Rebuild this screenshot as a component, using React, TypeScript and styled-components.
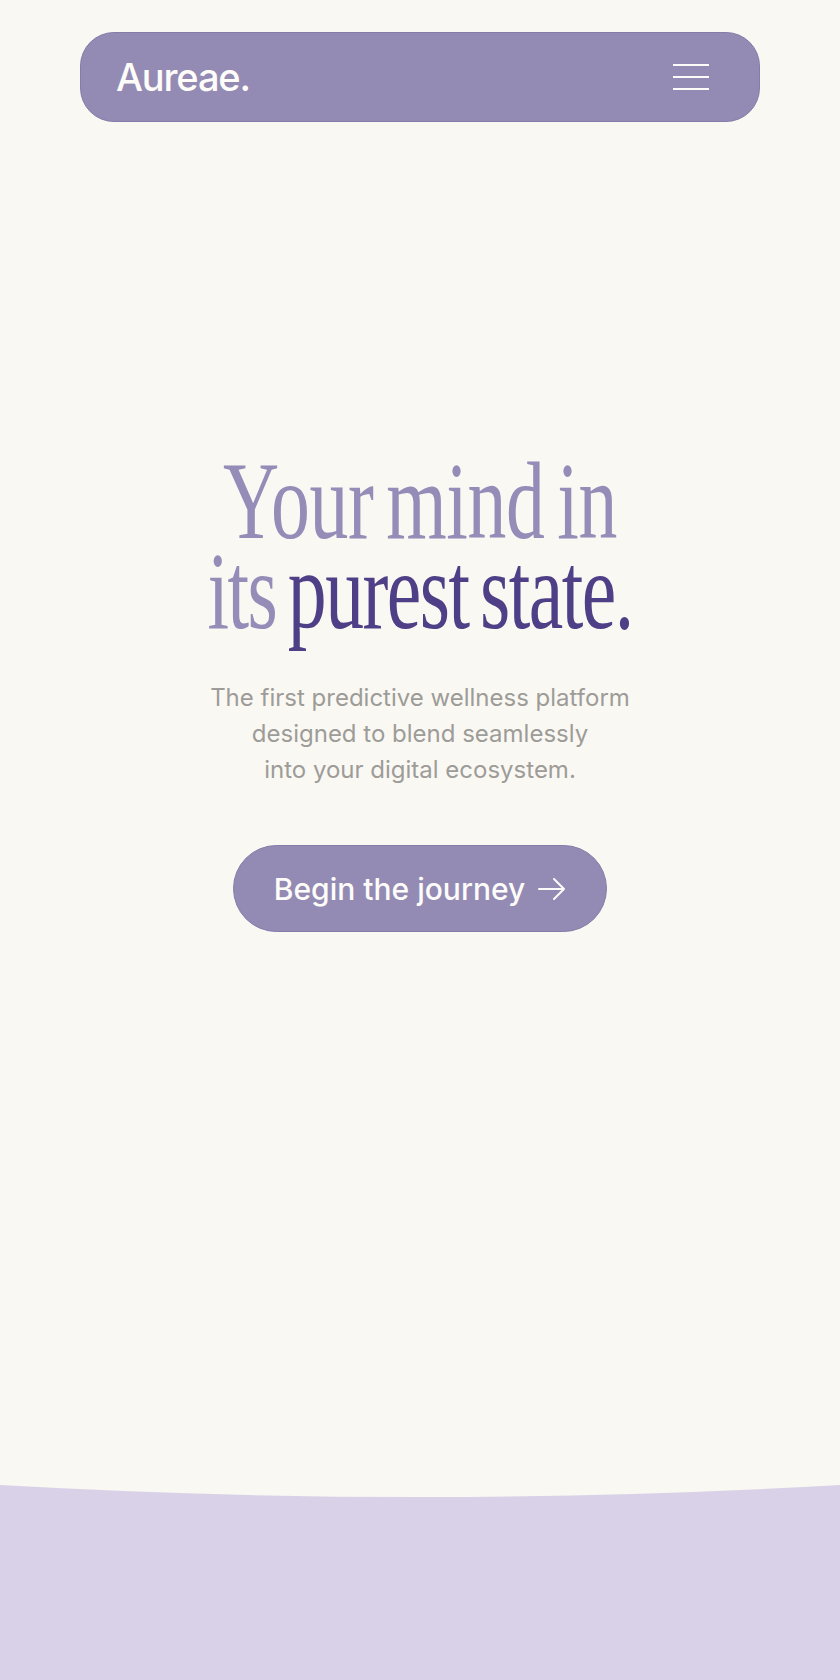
import React from "react";
import styled, { createGlobalStyle } from "styled-components";

const GlobalStyle = createGlobalStyle`
  * {
    box-sizing: border-box;
  }
  html, body {
    margin: 0;
    padding: 0;
    background: #faf8f3;
  }
  body {
    font-family: Inter, "Noto Sans", "Liberation Sans", sans-serif;
    -webkit-font-smoothing: antialiased;
  }
`;

const Page = styled.div`
  min-height: 100vh;
  display: flex;
  flex-direction: column;
  background: #faf8f3;
`;

const Header = styled.header`
  padding: 32px 80px 0;
`;

const Nav = styled.nav`
  height: 90px;
  display: flex;
  align-items: center;
  justify-content: space-between;
  padding: 0 50px 0 35px;
  background: #938bb4;
  border: 1px solid #857da9;
  border-radius: 34px;
`;

const Logo = styled.a`
  font-family: Inter, "Liberation Sans", sans-serif;
  font-size: 38px;
  font-weight: 500;
  letter-spacing: -0.03em;
  color: #fdfcf9;
  text-decoration: none;
  line-height: 1;
`;

const MenuButton = styled.button`
  display: flex;
  flex-direction: column;
  gap: 10px;
  padding: 0;
  border: none;
  background: transparent;
  cursor: pointer;
`;

const MenuLine = styled.span`
  display: block;
  width: 36px;
  height: 2px;
  background: #fdfcf9;
`;

const Hero = styled.main`
  flex: 1;
  display: flex;
  flex-direction: column;
  align-items: center;
  padding-top: 334px;
`;

const Headline = styled.h1`
  margin: 0;
  width: 100%;
  font-family: "Liberation Serif", "Times New Roman", serif;
  font-weight: 400;
  font-size: 111px;
  line-height: 90px;
  letter-spacing: -0.02em;
  word-spacing: -0.08em;
  text-align: center;
  color: #958cb7;
  transform: scaleX(0.7);
`;

// first line sets a touch looser than the second
const HeadLine = styled.span<{ $spread?: boolean }>`
  letter-spacing: ${(p) => (p.$spread ? "-0.005em" : "-0.02em")};
`;

const Accent = styled.span`
  color: #4f3f87;
`;

const Lead = styled.p`
  margin: 44px 0 0;
  font-size: 24px;
  line-height: 36px;
  text-align: center;
  color: #9d9c98;
`;

const CtaButton = styled.button`
  margin-top: 57px;
  height: 87px;
  padding: 0 40px;
  display: flex;
  align-items: center;
  gap: 13px;
  background: #938bb4;
  border: 1px solid #857da9;
  border-radius: 44px;
  font-family: Inter, "Liberation Sans", sans-serif;
  font-size: 30px;
  font-weight: 500;
  color: #fdfcf9;
  cursor: pointer;
`;

const Footer = styled.footer`
  height: 195px;
  background: #d9d1e7;
`;

const Curve = styled.svg`
  display: block;
  width: 100%;
  height: 14px;
`;

const ArrowIcon = () => (
  <svg width="28" height="22" viewBox="0 0 28 22" fill="none">
    <path
      d="M1 11h25M16 1l10 10-10 10"
      stroke="#fdfcf9"
      strokeWidth="2"
      strokeLinecap="round"
      strokeLinejoin="round"
    />
  </svg>
);

export default function App() {
  return (
    <>
      <GlobalStyle />
      <Page>
        <Header>
          <Nav>
            <Logo href="#">Aureae.</Logo>
            <MenuButton aria-label="Menu">
              <MenuLine />
              <MenuLine />
              <MenuLine />
            </MenuButton>
          </Nav>
        </Header>
        <Hero>
          <Headline>
            <HeadLine $spread>Your mind in</HeadLine>
            <br />
            <HeadLine>
              its <Accent>purest state.</Accent>
            </HeadLine>
          </Headline>
          <Lead>
            The first predictive wellness platform
            <br />
            designed to blend seamlessly
            <br />
            into your digital ecosystem.
          </Lead>
          <CtaButton>
            Begin the journey
            <ArrowIcon />
          </CtaButton>
        </Hero>
        <Footer>
          <Curve viewBox="0 0 840 14" preserveAspectRatio="none">
            <path d="M0 0H840Q420 24 0 0Z" fill="#faf8f3" />
          </Curve>
        </Footer>
      </Page>
    </>
  );
}
